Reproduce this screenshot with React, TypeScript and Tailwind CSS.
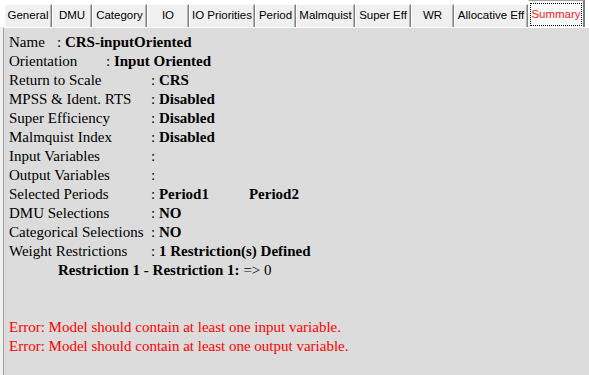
const tabs: { label: string; width: string }[] = [
  { label: 'General', width: 'w-[48px]' },
  { label: 'DMU', width: 'w-[40px]' },
  { label: 'Category', width: 'w-[55px]' },
  { label: 'IO', width: 'w-[42px]' },
  { label: 'IO Priorities', width: 'w-[66px]' },
  { label: 'Period', width: 'w-[41px]' },
  { label: 'Malmquist', width: 'w-[59px]' },
  { label: 'Super Eff', width: 'w-[56px]' },
  { label: 'WR', width: 'w-[43px]' },
  { label: 'Allocative Eff', width: 'w-[74px]' },
];

function Row({
  label,
  labelWidth = 'w-[142px]',
  children,
}: {
  label: string;
  labelWidth?: string;
  children?: React.ReactNode;
}) {
  return (
    <div className="flex h-[19px] items-center whitespace-pre">
      <span className={`${labelWidth} shrink-0`}>{label}</span>
      <span>: </span>
      {children}
    </div>
  );
}

export default function App() {
  return (
    <div className="flex h-[375px] w-[589px] flex-col overflow-hidden bg-white">
      <div className="flex h-[27px] items-end pl-[4px] font-['Liberation_Sans',sans-serif] text-[11.5px] text-black">
        {tabs.map((t) => (
          <div
            key={t.label}
            className={`${t.width} flex h-[23px] shrink-0 items-center justify-center whitespace-nowrap border-l border-t border-r border-l-white border-t-white border-r-[#808080] bg-[#f0f0f0] shadow-[inset_-1px_0_0_#b4b4b4]`}
          >
            {t.label}
          </div>
        ))}
        <div className="flex h-[27px] w-[57px] shrink-0 items-center justify-center border-l border-t border-r-2 border-l-white border-t-[#a0a0a0] border-r-[#808080] bg-[#fafafa] px-[1px] pt-[2px] pb-[1px]">
          <div className="flex h-full w-full items-center justify-center border border-dotted border-black text-[#ff1a1a]">
            Summary
          </div>
        </div>
      </div>

      <div className="flex flex-1 bg-[#f0f0f0] pl-[3px]">
        <div className="flex-1 border-l border-t border-l-[#a0a0a0] border-t-white bg-[#dcdcdc] pt-[5px] pl-[5px] font-['Liberation_Serif',serif] text-[15px] leading-[19px] text-black">
          <Row label="Name " labelWidth="w-[48px]">
            <b>CRS-inputOriented</b>
          </Row>
          <Row label="Orientation" labelWidth="w-[97px]">
            <b>Input Oriented</b>
          </Row>
          <Row label="Return to Scale">
            <b>CRS</b>
          </Row>
          <Row label="MPSS & Ident. RTS">
            <b>Disabled</b>
          </Row>
          <Row label="Super Efficiency">
            <b>Disabled</b>
          </Row>
          <Row label="Malmquist Index">
            <b>Disabled</b>
          </Row>
          <Row label="Input Variables" />
          <Row label="Output Variables" />
          <Row label="Selected Periods">
            <b>Period1</b>
            <b className="ml-[40px]">Period2</b>
          </Row>
          <Row label="DMU Selections">
            <b>NO</b>
          </Row>
          <Row label="Categorical Selections">
            <b>NO</b>
          </Row>
          <Row label="Weight Restrictions">
            <b>1 Restriction(s) Defined</b>
          </Row>
          <div className="flex h-[19px] items-center whitespace-pre pl-[49px]">
            <b>Restriction 1 - Restriction 1: </b>
            <span>=&gt; 0</span>
          </div>
          <div className="h-[38px]" />
          <div className="h-[19px] text-[#ff0000]">
            Error: Model should contain at least one input variable.
          </div>
          <div className="h-[19px] text-[#ff0000]">
            Error: Model should contain at least one output variable.
          </div>
        </div>
      </div>
    </div>
  );
}
